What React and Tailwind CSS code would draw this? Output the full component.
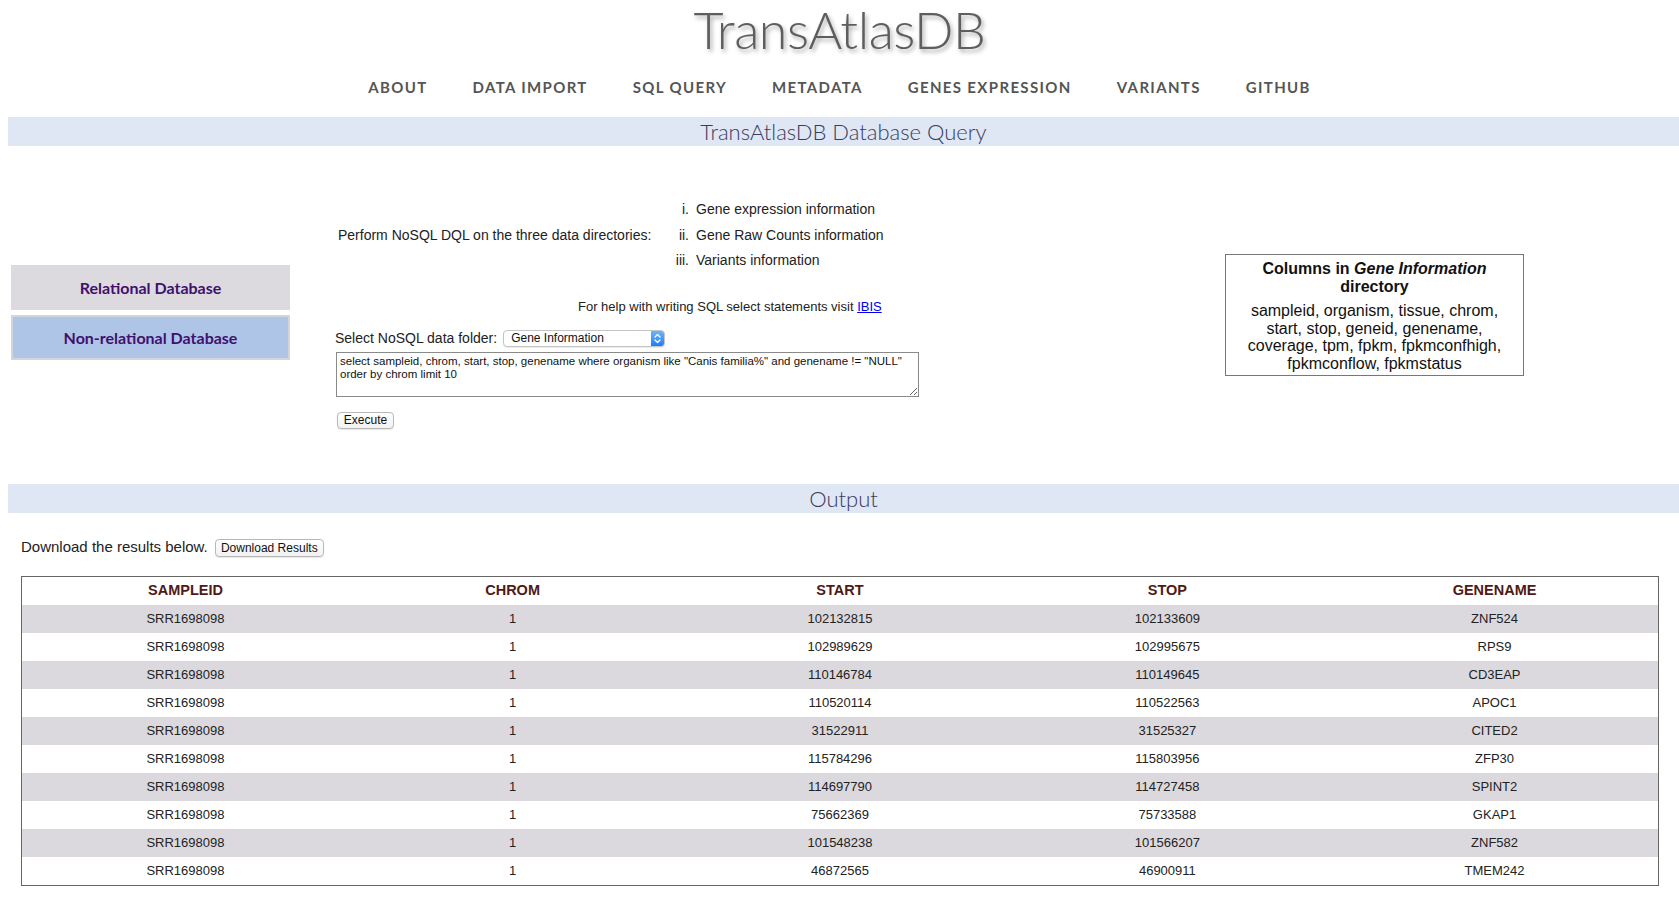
import React from "react";

const rows = [
  ["SRR1698098", "1", "102132815", "102133609", "ZNF524"],
  ["SRR1698098", "1", "102989629", "102995675", "RPS9"],
  ["SRR1698098", "1", "110146784", "110149645", "CD3EAP"],
  ["SRR1698098", "1", "110520114", "110522563", "APOC1"],
  ["SRR1698098", "1", "31522911", "31525327", "CITED2"],
  ["SRR1698098", "1", "115784296", "115803956", "ZFP30"],
  ["SRR1698098", "1", "114697790", "114727458", "SPINT2"],
  ["SRR1698098", "1", "75662369", "75733588", "GKAP1"],
  ["SRR1698098", "1", "101548238", "101566207", "ZNF582"],
  ["SRR1698098", "1", "46872565", "46900911", "TMEM242"],
];

const nav = ["ABOUT", "DATA IMPORT", "SQL QUERY", "METADATA", "GENES EXPRESSION", "VARIANTS", "GITHUB"];

export default function App() {
  return (
    <div className="w-[1679px] min-h-[920px] bg-white font-['Liberation_Sans',Arial,sans-serif] text-[#222]">
      {/* Title */}
      <div className="h-[62px] flex justify-center">
        <h1 className="h-[60px] font-['Lato',sans-serif] font-light text-[52px] leading-[58px] text-[#5e5e5e] [text-shadow:2px_3px_4px_#a8a8a8] tracking-[-0.5px]">
          TransAtlasDB
        </h1>
      </div>
      {/* Nav */}
      <nav className="h-[50px] flex items-center justify-center gap-[45px] font-['Lato',sans-serif] font-bold text-[15px] tracking-[0.09em] text-[#555]">
        {nav.map((n) => (
          <span key={n}>{n}</span>
        ))}
      </nav>
      {/* Band */}
      <div className="mt-[5px] ml-[8px] h-[29px] bg-[#dfe7f5] flex items-center justify-center font-['Lato',sans-serif] font-light text-[22px] text-[#3b3b5b]">
        TransAtlasDB Database Query
      </div>

      {/* Query section */}
      <div className="flex items-start">
        {/* Sidebar */}
        <div className="w-[290px] pl-[11px] mt-[119px] flex flex-col gap-[5px] font-['Lato',sans-serif] font-bold text-[16px] text-[#41106e]">
          <div className="h-[45px] bg-[#dcd9df] flex items-center justify-center">Relational Database</div>
          <div className="h-[45px] bg-[#aec5e7] border-2 border-[#d2d6db] flex items-center justify-center">
            Non-relational Database
          </div>
        </div>

        {/* Middle */}
        <div className="ml-[45px] w-[590px] text-[14px]">
          <div className="mt-[51px] flex items-center">
            <div className="w-[335px] pl-[3px]">Perform NoSQL DQL on the three data directories:</div>
            <div className="flex flex-col">
              {[
                ["i.", "Gene expression information"],
                ["ii.", "Gene Raw Counts information"],
                ["iii.", "Variants information"],
              ].map(([n, t]) => (
                <div key={n} className="flex h-[25.5px] items-center">
                  <span className="w-[19px] text-right">{n}</span>
                  <span className="ml-[7px]">{t}</span>
                </div>
              ))}
            </div>
          </div>
          <div className="mt-[24px] pl-[243px] leading-[18px] text-[13px]">
            For help with writing SQL select statements visit{" "}
            <a href="#" className="text-[#0000ee] underline">IBIS</a>
          </div>
          <div className="mt-[14px] h-[17px] flex items-center">
            <span>Select NoSQL data folder:</span>
            <div className="ml-[6px] w-[162px] h-[17px] rounded-[4px] border border-[#c4c4c4] bg-white flex items-stretch shadow-[0_1px_1px_rgba(0,0,0,0.08)]">
              <span className="flex-1 text-[12px] leading-[15px] pl-[7px] text-[#111]">Gene Information</span>
              <span className="w-[13px] rounded-r-[3px] bg-gradient-to-b from-[#6cb3fa] to-[#1a7ef5] flex items-center justify-center">
                <svg width="7" height="11" viewBox="0 0 7 11" fill="none" stroke="white" strokeWidth="1.3" strokeLinecap="round" strokeLinejoin="round">
                  <path d="M1 4 L3.5 1.5 L6 4" />
                  <path d="M1 7 L3.5 9.5 L6 7" />
                </svg>
              </span>
            </div>
          </div>
          <textarea
            readOnly
            defaultValue={'select sampleid, chrom, start, stop, genename where organism like "Canis familia%" and genename != "NULL" order by chrom limit 10'}
            className="block mt-[5px] ml-[1px] w-[583px] h-[45px] border border-[#8a8a8a] text-[11.5px] leading-[13px] px-[3px] py-[2px] text-[#111] font-['Liberation_Sans',Arial,sans-serif] outline-none resize"
          />
          <button className="mt-[15px] ml-[2px] h-[17px] w-[57px] rounded-[4px] border border-[#b8b8b8] bg-gradient-to-b from-white to-[#f1f1f1] text-[12px] leading-[15px] text-[#111] shadow-[0_1px_1px_rgba(0,0,0,0.1)]">
            Execute
          </button>
        </div>

        {/* Right box */}
        <div className="ml-[300px] mt-[108px] w-[299px] h-[122px] border border-[#777] text-center text-[16px] text-[#111] pt-[5px]">
          <div className="font-bold leading-[18px]">
            Columns in <i>Gene Information</i>
            <br />
            directory
          </div>
          <div className="mt-[6px] leading-[17.5px]">
            sampleid, organism, tissue, chrom,
            <br />
            start, stop, geneid, genename,
            <br />
            coverage, tpm, fpkm, fpkmconfhigh,
            <br />
            fpkmconflow, fpkmstatus
          </div>
        </div>
      </div>

      {/* Output band */}
      <div className="mt-[54px] ml-[8px] h-[29px] bg-[#dfe7f5] flex items-center justify-center font-['Lato',sans-serif] font-light text-[22px] text-[#3b3b5b]">
        Output
      </div>

      <div className="mt-[26px] h-[18px] pl-[21px] flex items-center">
        <span className="text-[15px]">Download the results below.</span>
        <button className="ml-[7px] h-[18px] w-[109px] rounded-[4px] border border-[#b8b8b8] bg-gradient-to-b from-white to-[#f1f1f1] text-[12px] leading-[16px] text-[#111] shadow-[0_1px_1px_rgba(0,0,0,0.1)]">
          Download Results
        </button>
      </div>

      <table className="mt-[19px] ml-[21px] w-[1638px] table-fixed border-collapse border border-[#666]">
        <thead>
          <tr className="h-[29px]">
            {["SAMPLEID", "CHROM", "START", "STOP", "GENENAME"].map((h) => (
              <th key={h} className="font-bold text-[14.5px] text-[#4f1a16] text-center p-0">
                {h}
              </th>
            ))}
          </tr>
        </thead>
        <tbody>
          {rows.map((r, i) => (
            <tr key={i} className={i % 2 === 0 ? "h-[28px] bg-[#dcd9de]" : "h-[28px] bg-white"}>
              {r.map((c, j) => (
                <td key={j} className="text-center text-[13px] text-[#222] p-0">
                  {c}
                </td>
              ))}
            </tr>
          ))}
        </tbody>
      </table>
    </div>
  );
}
